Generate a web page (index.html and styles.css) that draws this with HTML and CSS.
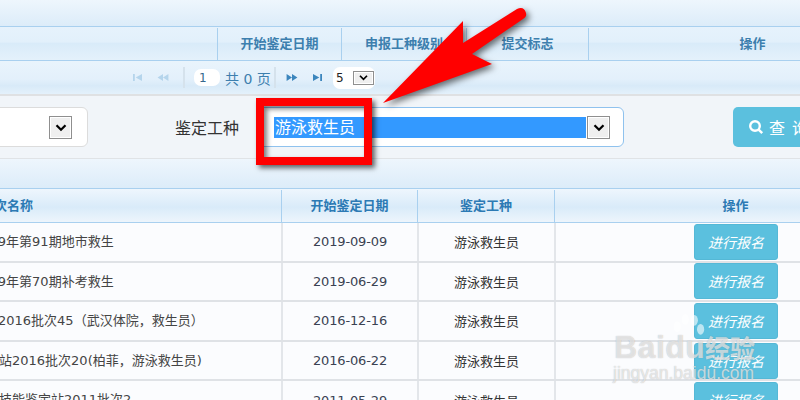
FILE: index.html
```html
<!DOCTYPE html>
<html lang="zh-CN">
<head>
    <meta charset="UTF-8">
    <title>鉴定报名</title>
    <link rel="stylesheet" href="styles.css">
</head>
<body>
    <div class="page">
        <div class="band top-band"></div>
        <div class="grid-head top-head">
            <div></div>
            <div>开始鉴定日期</div>
            <div>申报工种级别</div>
            <div>提交标志</div>
            <div>操作</div>
        </div>
        <div class="pager">
            <svg class="pg-icon dim" viewBox="0 0 12 10"><path d="M1 1h2v8H1zM11 1v8L4 5z"/></svg>
            <svg class="pg-icon pg-wide dim" viewBox="0 0 14 10"><path d="M7 1v8L1 5zM13 1v8L7 5z"/></svg>
            <span class="pg-sep"></span>
            <span class="pg-input">1</span>
            <span class="pg-total">共 0 页</span>
            <span class="pg-sep"></span>
            <svg class="pg-icon pg-wide" viewBox="0 0 14 10"><path d="M1 1l6 4-6 4zM7 1l6 4-6 4z" /></svg>
            <svg class="pg-icon" viewBox="0 0 12 10"><path d="M1 1l7 4-7 4zM9 1h2v8H9z"/></svg>
            <span class="pg-size">5<span class="drop small"><svg viewBox="0 0 12 8"><path d="M2 2l4 4 4-4"/></svg></span></span>
        </div>
        <div class="filter">
            <div class="select first-select">
                <span class="drop"><svg viewBox="0 0 12 8"><path d="M2 2l4 4 4-4"/></svg></span>
            </div>
            <label class="filter-label">鉴定工种</label>
            <div class="select job-select">
                <span class="selected"><span>游泳救生员</span></span>
                <span class="drop"><svg viewBox="0 0 12 8"><path d="M2 2l4 4 4-4"/></svg></span>
            </div>
            <button class="search-btn" type="button">
                <svg viewBox="0 0 16 16"><circle cx="7" cy="7" r="4.8"/><path d="M10.6 10.6l3.6 3.6"/></svg>
                查 询
            </button>
        </div>
        <div class="band mid-band"></div>
        <div class="grid-head list-head">
            <div class="name-head">批次名称</div>
            <div>开始鉴定日期</div>
            <div>鉴定工种</div>
            <div>操作</div>
        </div>
        <div class="row">
            <div class="name name-a">2019年第91期地市救生</div>
            <div class="date">2019-09-09</div>
            <div>游泳救生员</div>
            <div><button class="apply" type="button">进行报名</button></div>
        </div>
        <div class="row">
            <div class="name name-a">2019年第70期补考救生</div>
            <div class="date">2019-06-29</div>
            <div>游泳救生员</div>
            <div><button class="apply" type="button">进行报名</button></div>
        </div>
        <div class="row">
            <div class="name name-b">2016批次45（武汉体院，救生员）</div>
            <div class="date">2016-12-16</div>
            <div>游泳救生员</div>
            <div><button class="apply" type="button">进行报名</button></div>
        </div>
        <div class="row">
            <div class="name name-c">站2016批次20(柏菲，游泳救生员)</div>
            <div class="date">2016-06-22</div>
            <div>游泳救生员</div>
            <div><button class="apply" type="button">进行报名</button></div>
        </div>
        <div class="row">
            <div class="name name-c">技能鉴定站2011批次2</div>
            <div class="date">2011-05-29</div>
            <div>游泳救生员</div>
            <div><button class="apply" type="button">进行报名</button></div>
        </div>
    </div>

    <!-- annotation drawn over the screenshot -->
    <svg class="arrow" viewBox="0 0 800 400">
        <path d="M383 103L463 21L463 43L517 9Q524 6 526 13Q527 17 523 19L472 54L492 64Z"/>
    </svg>
    <div class="red-box"></div>

    <div class="watermark">
        <svg class="paw" viewBox="0 0 40 40">
            <ellipse cx="8" cy="14" rx="4" ry="6"/>
            <ellipse cx="17" cy="6" rx="4" ry="6"/>
            <ellipse cx="27" cy="7" rx="4" ry="6"/>
            <ellipse cx="34" cy="17" rx="4" ry="6"/>
        </svg>
        <span class="wm-baidu">Baidu</span>
        <span class="wm-cn">经验</span>
        <span class="wm-url">jingyan.baidu.com</span>
    </div>
</body>
</html>
```

FILE: styles.css
```css
html, body { margin: 0; padding: 0; width: 800px; height: 400px; overflow: hidden; background: #f1f5f9; }
body { position: relative; font-family: "DejaVu Sans", "Noto Sans CJK SC", sans-serif; font-size: 13px; color: #333; }
.page { width: 916px; }

.band { background: linear-gradient(180deg, #eef6fd 0%, #dcecf9 100%); }
.top-band { height: 26px; border-bottom: 1px solid #a9d0ef; }
.mid-band { height: 29px; border-top: 1px solid #e0e3e6; border-bottom: 1px solid #a9d0ef; }

.grid-head { display: grid; height: 33px; align-items: center; text-align: center; font-weight: bold; border-bottom: 1px solid #a9d0ef; }
.grid-head > div { height: 32px; line-height: 32px; border-left: 1px solid #a9d0ef; }
.grid-head > div:first-child { border-left: none; }
.top-head { grid-template-columns: 217px 124px 125px 122px 328px; color: #3d7fae; background: linear-gradient(180deg, #e6f2fc 0%, #e2f0fb 45%, #d9ebf9 50%, #e4f1fb 100%); }
.list-head { grid-template-columns: 281px 136px 137px 362px; color: #2c7ab4; background: linear-gradient(180deg, #eef6fd 0%, #d9ebf9 55%, #edf5fc 100%); }
.name-head { text-align: left; text-indent: -19px; overflow: hidden; white-space: nowrap; }

.pager { display: flex; align-items: center; height: 33px; padding-left: 132px; color: #3d7fae; background: linear-gradient(180deg, #e9f4fc 0%, #e3f0fb 55%, #d8eaf8 75%, #e4f1fb 100%); border-bottom: 2px solid #dfe1e3; }
.pg-icon { width: 11px; height: 9px; margin-right: 13px; fill: #3c86bd; flex: none; }
.pg-wide { width: 14px; }
.pg-icon.dim { fill: #b5d5ec; }
.pg-sep { width: 2px; height: 21px; background: #d5e2ec; margin: 0 9px 0 0; flex: none; }
.pg-input { width: 26px; height: 17px; line-height: 19px; background: #fff; border-radius: 7px; padding-left: 5px; box-sizing: border-box; color: #36688c; margin-right: 5px; font-size: 12px; }
.pg-total { width: 49px; font-size: 14px; white-space: nowrap; }
.pg-size { display: flex; align-items: center; justify-content: space-between; width: 42px; height: 22px; margin-left: -3px; padding: 0 1px 0 3px; box-sizing: border-box; background: #fff; border-radius: 7px; color: #222; font-size: 12px; }

.drop { display: flex; align-items: center; justify-content: center; width: 23px; height: 23px; box-sizing: border-box; background: #efefef; border: 1px solid #8f8f8f; box-shadow: inset 0 0 0 1px #fff; flex: none; }
.drop svg { width: 14px; height: 9px; fill: none; stroke: #000; stroke-width: 2; }
.drop.small { width: 21px; height: 14px; }
.drop.small svg { width: 11px; height: 7px; }

.filter { display: flex; align-items: center; height: 62px; background: #f1f5f9; }
.select { display: flex; align-items: center; height: 40px; box-sizing: border-box; background: #fff; border: 1px solid #dcdcdc; border-radius: 6px; }
.first-select { width: 200px; margin-left: -112px; justify-content: flex-end; padding-right: 15px; }
.filter-label { margin-left: 87px; width: 83px; font-size: 16px; }
.job-select { width: 366px; border: 1px solid #8fc2ee; padding-left: 15px; }
.selected { display: block; width: 312px; height: 21px; line-height: 21px; background: #3399ff; color: #fff; font-size: 16px; margin-right: 1px; }
.selected span { padding-left: 1px; }
.search-btn { display: flex; align-items: center; gap: 5px; width: 130px; height: 40px; margin-left: 109px; padding: 0 0 0 15px; background: #5bc0de; color: #fff; border: none; border-radius: 5px; font-family: inherit; font-size: 16px; letter-spacing: 1px; white-space: nowrap; }
.search-btn svg { width: 16px; height: 16px; fill: none; stroke: #fff; stroke-width: 2.4; flex: none; }

.row { display: grid; grid-template-columns: 281px 136px 137px 362px; height: 39.6px; box-sizing: border-box; background: #fbfcfe; border-bottom: 2px solid #dfe2e6; text-align: center; align-items: center; }
.row > div { display: flex; align-items: center; justify-content: center; height: 100%; border-left: 2px solid #e3e6ea; box-sizing: border-box; }
.row > div:first-child { border-left: none; }
.row .name { display: block; line-height: 37px; text-align: left; white-space: nowrap; overflow: hidden; color: #444; }
.name-a { text-indent: -27px; }
.name-b { text-indent: -2px; }
.name-c { text-indent: -1px; }
.date { letter-spacing: -0.15px; color: #3a4252; }
.apply { width: 84px; height: 36px; padding: 0; background: #5bc0de; color: #fff; border: 1px solid #55b8d6; border-radius: 3px; font-family: inherit; font-size: 14px; font-style: italic; }

.arrow { position: absolute; left: 0; top: 0; width: 800px; height: 400px; filter: drop-shadow(3px 3px 3px rgba(0,0,0,0.55)); }
.arrow path { fill: #ff0000; }
.red-box { position: absolute; left: 256px; top: 98px; width: 116px; height: 67px; box-sizing: border-box; border: 8px solid #ff0000; box-shadow: 3px 3px 5px rgba(0,0,0,0.6), inset 3px 3px 5px rgba(0,0,0,0.5); }

.watermark { position: absolute; left: 612px; top: 312px; width: 150px; height: 72px; color: rgba(255,255,255,0.62); font-family: "Liberation Sans", sans-serif; text-shadow: 0 0 1px rgba(120,120,120,0.55); }
.paw { position: absolute; left: 58px; top: 2px; width: 36px; height: 36px; fill: rgba(255,255,255,0.6); }
.wm-baidu { position: absolute; left: 2px; top: 17px; font-size: 32px; font-weight: bold; letter-spacing: 0.5px; }
.wm-cn { position: absolute; left: 93px; top: 20px; font-family: "Noto Sans CJK SC", sans-serif; font-size: 25px; font-weight: bold; line-height: 30px; }
.wm-url { position: absolute; left: 1px; top: 51px; font-size: 17.5px; }
```
